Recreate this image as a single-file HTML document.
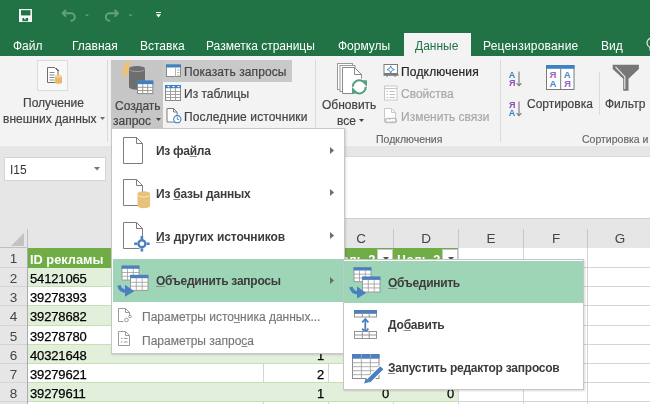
<!DOCTYPE html>
<html><head><meta charset="utf-8">
<style>
*{margin:0;padding:0;box-sizing:border-box}
html,body{width:650px;height:404px;overflow:hidden;background:#fff}
body{position:relative;-webkit-font-smoothing:antialiased;font-family:"Liberation Sans",sans-serif;font-size:12px;color:#262626}
.a{position:absolute;white-space:nowrap;will-change:transform}
svg{position:absolute;overflow:visible}
.lab{font-size:12px;line-height:14px;color:#444;-webkit-text-stroke-width:0.2px}
.dis{color:#a8a8a8}
.ch{top:231px;width:16px;margin-left:-8px;text-align:center;font-size:13.5px;line-height:15px;color:#444}
.rh{left:0;width:27px;text-align:center;font-size:13.5px;line-height:21px;color:#444}
.cell{font-size:13px;line-height:21px;color:#000;letter-spacing:-0.15px;-webkit-text-stroke:0.25px #000}
.fb{width:16px;height:16px;background:#fff;border:1px solid #c6c6c6}
.mi{font-size:12px;font-weight:bold;line-height:15px;color:#3c3c3c;letter-spacing:-0.22px}
u{text-decoration-color:#8a8a8a;text-underline-offset:1px}
.ms{font-size:12px;line-height:15px;color:#777;-webkit-text-stroke-width:0.15px}
.glab{font-size:10.5px;line-height:14px;color:#666;-webkit-text-stroke-width:0.15px}
</style></head><body>

<!-- title bar -->
<div class="a" style="left:0;top:0;width:650px;height:56px;background:#217346"></div>
<div class="a" style="left:13px;top:38px;color:#fff;line-height:16px">Файл</div>
<div class="a" style="left:72px;top:38px;color:#fff;line-height:16px">Главная</div>
<div class="a" style="left:140px;top:38px;color:#fff;line-height:16px">Вставка</div>
<div class="a" style="left:206px;top:38px;color:#fff;line-height:16px">Разметка страницы</div>
<div class="a" style="left:338px;top:38px;color:#fff;line-height:16px">Формулы</div>
<div class="a" style="left:404px;top:33px;width:67px;height:24px;background:#f3f3f3"></div>
<div class="a" style="left:415px;top:38px;color:#217346;line-height:16px">Данные</div>
<div class="a" style="left:482.5px;top:38px;color:#fff;line-height:16px;letter-spacing:0.2px">Рецензирование</div>
<div class="a" style="left:601px;top:38px;color:#fff;line-height:16px">Вид</div>


<!-- QAT -->
<svg style="left:19px;top:9px" width="13" height="13" viewBox="0 0 13 13">
 <rect x="0" y="0" width="13" height="13" fill="#f4f7f5"/>
 <rect x="2" y="1.2" width="9.4" height="5.2" fill="#217346"/>
 <rect x="3.4" y="9" width="5.7" height="3.2" fill="#217346"/>
 <rect x="5.2" y="9" width="1.6" height="1.4" fill="#f4f7f5"/>
</svg>
<svg style="left:0;top:0" width="140" height="30" viewBox="0 0 140 30">
 <g fill="none" stroke="#62a37c" stroke-width="2">
  <path d="M66 10l-3.3 3.3 3.3 3.3"/>
  <path d="M63.5 13.3h7.6a3.7 3.7 0 0 1 0 7.4h-0.6"/>
  <path d="M114.6 10l3.3 3.3-3.3 3.3"/>
  <path d="M117.1 13.3h-7.6a3.7 3.7 0 0 0 0 7.4h0.6"/>
 </g>
 <path d="M85 14.5h4l-2 2z" fill="#62a37c"/>
 <path d="M128.5 14.5h4l-2 2z" fill="#62a37c"/>
</svg>
<svg style="left:155.8px;top:12.3px" width="5" height="6" viewBox="0 0 5 6">
 <rect x="0" y="0" width="5" height="1" fill="#fff"/>
 <path d="M0 2.3h5l-2.5 3.2z" fill="#fff"/>
</svg>
<svg style="left:646px;top:38px" width="12" height="16" viewBox="0 0 12 16">
 <path d="M4 12v-2.5a5 5 0 1 1 4 0v2.5z" fill="none" stroke="#e8f0eb" stroke-width="1.1"/>
</svg>

<!-- ribbon -->
<div class="a" style="left:0;top:56px;width:650px;height:90px;background:#f3f3f3"></div>


<!-- ribbon content -->
<div class="a" style="left:37px;top:60px;width:31px;height:31px;background:#f8f8f8;border:1px solid #dcdcdc"></div>
<svg style="left:47px;top:67px" width="16" height="18" viewBox="0 0 16 18">
 <path d="M0.5 0.5h7l3.5 3.5v11.5h-10.5z" fill="#fff" stroke="#6d6d6d"/>
 <path d="M2.5 5.5h5M2.5 8h5M2.5 10.5h5M2.5 13h5" stroke="#8a8a8a"/>
 <path d="M9 1l3 3" stroke="#6d6d6d"/>
 <path d="M8 9.5a3.5 1.2 0 0 1 7 0v6a3.5 1.2 0 0 1 -7 0z" fill="#e8b86b"/>
 <ellipse cx="11.5" cy="9.5" rx="3.5" ry="1.2" fill="#f3d19b"/>
</svg>
<div class="a lab" style="left:23px;top:96px">Получение</div>
<div class="a lab" style="left:3px;top:112px">внешних данных</div>
<svg style="left:100px;top:117px" width="5" height="3"><path d="M0 0h5l-2.5 3z" fill="#6d6d6d"/></svg>
<div class="a" style="left:107px;top:60px;width:1px;height:82px;background:#dadada"></div>

<div class="a" style="left:111px;top:60px;width:52px;height:68px;background:#c6c6c6"></div>
<div class="a" style="left:162px;top:60px;width:130px;height:21.5px;background:#c9c9c9"></div>
<svg style="left:0;top:0" width="650" height="150" viewBox="0 0 650 150">
 <path d="M126 62h6l-4.3 7.3h3.6l-10.3 11.2 4.2-8.5h-3.7z" fill="#efc070"/>
 <path d="M129 68.6a8 2.6 0 0 1 16 0v18.5a8 2.6 0 0 1 -16 0z" fill="#6e6e6e"/>
 <path d="M129.5 69.5a7.5 2 0 0 0 15 0" fill="none" stroke="#a5a5a5" stroke-width="0.9"/>
 <rect x="137.5" y="81" width="15.3" height="12.6" fill="#fff" stroke="#8a8a8a"/>
 <rect x="137" y="80.6" width="16.3" height="3.6" fill="#3e7fc2"/>
 <path d="M137.5 87.3h15.3M137.5 90.5h15.3M142.7 84.2v9.4M147.7 84.2v9.4" stroke="#9a9a9a"/>
</svg>
<div class="a lab" style="left:115px;top:98.5px">Создать</div>
<div class="a lab" style="left:113px;top:113.5px">запрос</div>
<svg style="left:155.5px;top:118px" width="5" height="3"><path d="M0 0h5l-2.5 3z" fill="#444"/></svg>

<svg style="left:0;top:0" width="650" height="150" viewBox="0 0 650 150">
 <rect x="166.5" y="65" width="14" height="11.5" fill="#fff" stroke="#8a8a8a"/>
 <rect x="166" y="64.5" width="15" height="3" fill="#3e82c4"/>
 <path d="M175.5 67.5v9M177 70h2.5M177 72.5h2.5M177 75h2.5" stroke="#b5b5b5"/>
</svg>
<div class="a lab" style="left:184px;top:65px;letter-spacing:0.1px">Показать запросы</div>
<svg style="left:0;top:0" width="650" height="150" viewBox="0 0 650 150">
 <rect x="165.5" y="85.5" width="15" height="15" fill="#fff" stroke="#8a8a8a"/>
 <rect x="165" y="85" width="16" height="3.2" fill="#3e82c4"/>
 <path d="M166 91.5h14M166 94.5h14M166 97.5h14M170.5 88v12.5M175.5 88v12.5" stroke="#a0a0a0"/>
 <path d="M167 86h3l-1.5 1.5zM172 86h3l-1.5 1.5zM177 86h3l-1.5 1.5z" fill="#fff"/>
</svg>
<div class="a lab" style="left:184px;top:87px">Из таблицы</div>
<svg style="left:0;top:0" width="650" height="150" viewBox="0 0 650 150">
 <path d="M167 108.5h6.5l3.5 3.5v10h-10z" fill="#fff" stroke="#7a7a7a"/>
 <path d="M173.5 108.5v3.5h3.5" fill="none" stroke="#7a7a7a"/>
 <circle cx="177.3" cy="119.2" r="3.6" fill="#fff" stroke="#3e82c4" stroke-width="1.1"/>
 <path d="M177.3 117.2v2.2h1.8" fill="none" stroke="#3e82c4" stroke-width="0.9"/>
</svg>
<div class="a lab" style="left:184px;top:110px;letter-spacing:0.13px">Последние источники</div>
<div class="a" style="left:315px;top:60px;width:1px;height:82px;background:#dadada"></div>

<!-- Подключения group -->
<svg style="left:0;top:0" width="400" height="100" viewBox="0 0 400 100">
 <rect x="337.5" y="63.5" width="15" height="26" fill="#fff" stroke="#9a9a9a"/>
 <rect x="340" y="65.5" width="15" height="26" fill="#fff" stroke="#9a9a9a"/>
 <path d="M342.5 67.5h12l7 7v19h-19z" fill="#fff" stroke="#8a8a8a"/>
 <path d="M354.5 67.5v7h7" fill="none" stroke="#8a8a8a"/>
 <circle cx="359.3" cy="86.8" r="8.5" fill="#fff"/>
 <g fill="none" stroke="#55a07f" stroke-width="2">
  <path d="M352.8 86.8A6.5 6.5 0 0 1 362.8 81.3"/>
  <path d="M365.8 86.8A6.5 6.5 0 0 1 355.8 92.3"/>
 </g>
 <path d="M360.5 80.2h6.5v6.5z" fill="#55a07f"/>
 <path d="M352 87v6.5h6.5z" fill="#55a07f"/>
</svg>
<div class="a lab" style="left:322px;top:97.5px">Обновить</div>
<div class="a lab" style="left:336.5px;top:114px">все</div>
<svg style="left:358.5px;top:119px" width="5" height="3"><path d="M0 0h5l-2.5 3z" fill="#444"/></svg>

<svg style="left:0;top:0" width="650" height="150" viewBox="0 0 650 150">
 <rect x="384" y="64.5" width="13.5" height="9" fill="#fff" stroke="#7a7a7a"/>
 <path d="M383.5 74h15v1.8h-15z" fill="#7a7a7a"/>
 <path d="M386 76h2M394 76h2" stroke="#7a7a7a"/>
 <path d="M390.7 65.8l1.1 2.6 2.6 1.1-2.6 1.1-1.1 2.6-1.1-2.6-2.6-1.1 2.6-1.1z" fill="none" stroke="#3e82c4" stroke-width="0.9"/>
</svg>
<div class="a lab" style="left:401px;top:65px;color:#262626;letter-spacing:0.18px">Подключения</div>
<svg style="left:0;top:0" width="650" height="150" viewBox="0 0 650 150">
 <rect x="384.5" y="86" width="12.5" height="14" fill="#fff" stroke="#c8c8c8"/>
 <path d="M384.5 88.5h12.5" stroke="#c8c8c8"/>
 <path d="M386.5 91.5h1.5M386.5 94.5h1.5M386.5 97.5h1.5M389.5 91.5h5.5M389.5 94.5h5.5M389.5 97.5h5.5" stroke="#c0c0c0"/>
</svg>
<div class="a lab dis" style="left:401px;top:87px">Свойства</div>
<svg style="left:0;top:0" width="650" height="150" viewBox="0 0 650 150">
 <path d="M384.5 108.5h7l4 4v9.5h-11z" fill="#fff" stroke="#c8c8c8"/>
 <path d="M391.5 108.5v4h4" fill="none" stroke="#c8c8c8"/>
 <path d="M390 118.3h-2.3a2.2 2.2 0 0 0 0 4.4h3a2.2 2.2 0 0 0 2-1.5M392 122.7h2.3a2.2 2.2 0 0 0 0-4.4h-3a2.2 2.2 0 0 0 -2 1.5" fill="none" stroke="#bdbdbd" stroke-width="1.3"/>
</svg>
<div class="a lab dis" style="left:401px;top:110px">Изменить связи</div>
<div class="a glab" style="left:376px;top:132px">Подключения</div>
<div class="a" style="left:500px;top:60px;width:1px;height:82px;background:#dadada"></div>

<!-- sort group -->
<svg style="left:0;top:0" width="650" height="150" viewBox="0 0 650 150">
 <g font-family="Liberation Sans" font-size="9" font-weight="bold">
  <text x="508.8" y="78" fill="#3e82c4">A</text>
  <text x="509" y="85.6" fill="#8a4fb5">Я</text>
  <text x="509" y="107.6" fill="#8a4fb5">Я</text>
  <text x="508.8" y="115.6" fill="#3e82c4">A</text>
 </g>
 <g fill="none" stroke="#777" stroke-width="1.1">
  <path d="M519 71.5v14M516.6 83.2l2.4 2.6 2.4-2.6"/>
  <path d="M519 101.5v14M516.6 113.2l2.4 2.6 2.4-2.6"/>
 </g>
</svg>
<svg style="left:0;top:0" width="650" height="150" viewBox="0 0 650 150">
 <rect x="546.5" y="65.5" width="27.5" height="24" fill="#fff" stroke="#7a7a7a"/>
 <rect x="546" y="65" width="28.5" height="3.8" fill="#3e82c4"/>
 <path d="M560.7 68.8v21" stroke="#7a7a7a"/>
 <g font-family="Liberation Sans" font-size="9.5" font-weight="bold">
  <text x="549.6" y="78.2" fill="#9a62c2">Я</text>
  <text x="549.4" y="86.8" fill="#4a86c8">A</text>
  <text x="563.8" y="78.2" fill="#4a86c8">A</text>
  <text x="564" y="86.8" fill="#9a62c2">Я</text>
 </g>
</svg>
<div class="a lab" style="left:527px;top:97px">Сортировка</div>
<div class="a" style="left:599px;top:72px;width:1px;height:43px;background:#dadada"></div>
<svg style="left:0;top:0" width="650" height="150" viewBox="0 0 650 150">
 <path d="M612.7 64.8h26.2v4.2l-10.4 9.8v12h-5.3v-12l-10.5-9.8z" fill="#777"/>
 <path d="M615.5 66.8l9.3 9.8v12.4" fill="none" stroke="#eee" stroke-width="1.1"/>
</svg>
<div class="a lab" style="left:605px;top:97px">Фильтр</div>
<div class="a glab" style="left:582px;top:132px">Сортировка и фильтр</div>

<!-- gray band / formula bar area -->
<div class="a" style="left:0;top:146px;width:650px;height:102px;background:#e6e6e6"></div>
<div class="a" style="left:200px;top:156px;width:450px;height:1px;background:#dadada"></div>
<div class="a" style="left:200px;top:157px;width:450px;height:61px;background:#fff"></div>
<div class="a" style="left:4px;top:157px;width:102px;height:24px;background:#fff;border:1px solid #d4d4d4"></div>
<svg style="left:94px;top:167px" width="6" height="4"><path d="M0 0h6l-3 3.5z" fill="#777"/></svg>
<div class="a" style="left:10px;top:163px;line-height:14px;font-size:12px;color:#333">I15</div>

<!-- grid -->
<div class="a" style="left:0;top:219px;width:650px;height:29px;background:#e6e6e6"></div>
<div class="a" style="left:0;top:247px;width:28px;height:1px;background:#c0c0c0"></div>
<div class="a" style="left:200px;top:218px;width:450px;height:1px;background:#d0d0d0"></div>
<svg style="left:11px;top:233px" width="13" height="13"><path d="M13 0v13h-13z" fill="#c2c2c2"/></svg>
<div class="a" style="left:27px;top:229px;width:1px;height:19px;background:#c0c0c0"></div>
<div class="a" style="left:263px;top:229px;width:1px;height:19px;background:#c8c8c8"></div>
<div class="a" style="left:328px;top:229px;width:1px;height:19px;background:#c8c8c8"></div>
<div class="a" style="left:393px;top:229px;width:1px;height:19px;background:#c8c8c8"></div>
<div class="a" style="left:458px;top:229px;width:1px;height:19px;background:#c8c8c8"></div>
<div class="a" style="left:523px;top:229px;width:1px;height:19px;background:#c8c8c8"></div>
<div class="a" style="left:587px;top:229px;width:1px;height:19px;background:#c8c8c8"></div>
<div class="a ch" style="left:145px">A</div>
<div class="a ch" style="left:295px">B</div>
<div class="a ch" style="left:361px">C</div>
<div class="a ch" style="left:426px">D</div>
<div class="a ch" style="left:491px">E</div>
<div class="a ch" style="left:556px">F</div>
<div class="a ch" style="left:620px">G</div>
<div class="a" style="left:0;top:248px;width:27px;height:156px;background:#e6e6e6"></div>
<div class="a" style="left:28px;top:248px;width:430px;height:20px;background:#70ad47"></div>
<div class="a" style="left:30px;top:252px;line-height:15px;font-size:12.8px;font-weight:bold;color:#fff">ID рекламы</div>
<div class="a" style="left:267px;top:252px;line-height:15px;font-size:12.8px;font-weight:bold;color:#fff">Цель 1</div>
<div class="a" style="left:332px;top:252px;line-height:15px;font-size:12.8px;font-weight:bold;color:#fff">Цель 2</div>
<div class="a" style="left:397px;top:252px;line-height:15px;font-size:12.8px;font-weight:bold;color:#fff">Цель 3</div>
<div class="a fb" style="left:312px;top:249px"><svg style="left:4.5px;top:6.5px" width="6" height="4"><path d="M0 0h6l-3 3.5z" fill="#555"/></svg></div>
<div class="a fb" style="left:377px;top:249px"><svg style="left:4.5px;top:6.5px" width="6" height="4"><path d="M0 0h6l-3 3.5z" fill="#555"/></svg></div>
<div class="a fb" style="left:442px;top:249px"><svg style="left:4.5px;top:6.5px" width="6" height="4"><path d="M0 0h6l-3 3.5z" fill="#555"/></svg></div>
<div class="a rh" style="top:248px">1</div>
<div class="a" style="left:0;top:267px;width:27px;height:1px;background:#d4d4d4"></div>
<div class="a" style="left:458px;top:267px;width:192px;height:1px;background:#d4d4d4"></div>
<div class="a" style="left:28px;top:268px;width:430px;height:19px;background:#e2efda;border-bottom:1px solid #c6e0b4"></div>
<div class="a cell" style="left:30px;top:268px">54121065</div>
<div class="a rh" style="top:268px">2</div>
<div class="a" style="left:0;top:286px;width:27px;height:1px;background:#d4d4d4"></div>
<div class="a" style="left:458px;top:286px;width:192px;height:1px;background:#d4d4d4"></div>
<div class="a" style="left:28px;top:287px;width:430px;height:19px;background:#fff;border-bottom:1px solid #c6e0b4"></div>
<div class="a" style="left:263px;top:287px;width:1px;height:18px;background:#d4d4d4"></div>
<div class="a" style="left:328px;top:287px;width:1px;height:18px;background:#d4d4d4"></div>
<div class="a" style="left:393px;top:287px;width:1px;height:18px;background:#d4d4d4"></div>
<div class="a cell" style="left:30px;top:287px">39278393</div>
<div class="a rh" style="top:287px">3</div>
<div class="a" style="left:0;top:305px;width:27px;height:1px;background:#d4d4d4"></div>
<div class="a" style="left:458px;top:305px;width:192px;height:1px;background:#d4d4d4"></div>
<div class="a" style="left:28px;top:306px;width:430px;height:20px;background:#e2efda;border-bottom:1px solid #c6e0b4"></div>
<div class="a cell" style="left:30px;top:306px">39278682</div>
<div class="a rh" style="top:306px">4</div>
<div class="a" style="left:0;top:325px;width:27px;height:1px;background:#d4d4d4"></div>
<div class="a" style="left:458px;top:325px;width:192px;height:1px;background:#d4d4d4"></div>
<div class="a" style="left:28px;top:326px;width:430px;height:19px;background:#fff;border-bottom:1px solid #c6e0b4"></div>
<div class="a" style="left:263px;top:326px;width:1px;height:18px;background:#d4d4d4"></div>
<div class="a" style="left:328px;top:326px;width:1px;height:18px;background:#d4d4d4"></div>
<div class="a" style="left:393px;top:326px;width:1px;height:18px;background:#d4d4d4"></div>
<div class="a cell" style="left:30px;top:326px">39278780</div>
<div class="a rh" style="top:326px">5</div>
<div class="a" style="left:0;top:344px;width:27px;height:1px;background:#d4d4d4"></div>
<div class="a" style="left:458px;top:344px;width:192px;height:1px;background:#d4d4d4"></div>
<div class="a" style="left:28px;top:345px;width:430px;height:19px;background:#e2efda;border-bottom:1px solid #c6e0b4"></div>
<div class="a cell" style="left:30px;top:345px">40321648</div>
<div class="a cell" style="left:264px;top:345px;width:60px;text-align:right">1</div>
<div class="a cell" style="left:329px;top:345px;width:60px;text-align:right">0</div>
<div class="a cell" style="left:394px;top:345px;width:60px;text-align:right">0</div>
<div class="a rh" style="top:345px">6</div>
<div class="a" style="left:0;top:363px;width:27px;height:1px;background:#d4d4d4"></div>
<div class="a" style="left:458px;top:363px;width:192px;height:1px;background:#d4d4d4"></div>
<div class="a" style="left:28px;top:364px;width:430px;height:19px;background:#fff;border-bottom:1px solid #c6e0b4"></div>
<div class="a" style="left:263px;top:364px;width:1px;height:18px;background:#d4d4d4"></div>
<div class="a" style="left:328px;top:364px;width:1px;height:18px;background:#d4d4d4"></div>
<div class="a" style="left:393px;top:364px;width:1px;height:18px;background:#d4d4d4"></div>
<div class="a cell" style="left:30px;top:364px">39279621</div>
<div class="a cell" style="left:264px;top:364px;width:60px;text-align:right">2</div>
<div class="a cell" style="left:329px;top:364px;width:60px;text-align:right">0</div>
<div class="a cell" style="left:394px;top:364px;width:60px;text-align:right">0</div>
<div class="a rh" style="top:364px">7</div>
<div class="a" style="left:0;top:382px;width:27px;height:1px;background:#d4d4d4"></div>
<div class="a" style="left:458px;top:382px;width:192px;height:1px;background:#d4d4d4"></div>
<div class="a" style="left:28px;top:383px;width:430px;height:19px;background:#e2efda;border-bottom:1px solid #c6e0b4"></div>
<div class="a cell" style="left:30px;top:383px">39279611</div>
<div class="a cell" style="left:264px;top:383px;width:60px;text-align:right">1</div>
<div class="a cell" style="left:329px;top:383px;width:60px;text-align:right">0</div>
<div class="a cell" style="left:394px;top:383px;width:60px;text-align:right">0</div>
<div class="a rh" style="top:383px">8</div>
<div class="a" style="left:0;top:401px;width:27px;height:1px;background:#d4d4d4"></div>
<div class="a" style="left:458px;top:401px;width:192px;height:1px;background:#d4d4d4"></div>
<div class="a" style="left:28px;top:402px;width:430px;height:2px;background:#fff"></div>
<div class="a" style="left:27px;top:248px;width:1px;height:156px;background:#ababab"></div>
<div class="a" style="left:458px;top:248px;width:1px;height:156px;background:#d4d4d4"></div>
<div class="a" style="left:523px;top:248px;width:1px;height:156px;background:#d4d4d4"></div>
<div class="a" style="left:587px;top:248px;width:1px;height:156px;background:#d4d4d4"></div>
<div class="a" style="left:263px;top:402px;width:1px;height:2px;background:#d4d4d4"></div>
<div class="a" style="left:328px;top:402px;width:1px;height:2px;background:#d4d4d4"></div>
<div class="a" style="left:393px;top:402px;width:1px;height:2px;background:#d4d4d4"></div>

<!-- dropdown menu -->
<div class="a" style="left:111px;top:128px;width:234px;height:226px;background:#fff;border:1px solid #c6c6c6;box-shadow:1px 1px 2px rgba(0,0,0,.15)"></div>
<div class="a" style="left:113px;top:259px;width:231px;height:43px;background:#9fd5b7"></div>
<div class="a mi" style="left:156px;top:144px;letter-spacing:-0.27px">Из фа<u>й</u>ла</div>
<div class="a mi" style="left:156px;top:187px;letter-spacing:-0.21px">Из <u>б</u>азы данных</div>
<div class="a mi" style="left:156px;top:230px;letter-spacing:-0.08px"><u>И</u>з других источников</div>
<div class="a mi" style="left:156px;top:274px;letter-spacing:-0.26px"><u>О</u>бъединить запросы</div>
<div class="a ms" style="left:142px;top:310px">Параметры исто<u>ч</u>ника данных...</div>
<div class="a ms" style="left:142px;top:334px">Параметры запро<u>с</u>а</div>
<svg style="left:330px;top:147px" width="4" height="7"><path d="M0 0l4 3.5-4 3.5z" fill="#6d6d6d"/></svg>
<svg style="left:330px;top:189px" width="4" height="7"><path d="M0 0l4 3.5-4 3.5z" fill="#6d6d6d"/></svg>
<svg style="left:330px;top:232px" width="4" height="7"><path d="M0 0l4 3.5-4 3.5z" fill="#6d6d6d"/></svg>
<svg style="left:330px;top:277px" width="4" height="7"><path d="M0 0l4 3.5-4 3.5z" fill="#6d6d6d"/></svg>

<!-- submenu -->
<div class="a" style="left:343px;top:259px;width:241px;height:131px;background:#fff;border:1px solid #c6c6c6;box-shadow:1px 1px 2px rgba(0,0,0,.15)"></div>
<div class="a" style="left:344px;top:261px;width:239px;height:42px;background:#9fd5b7"></div>
<div class="a mi" style="left:388px;top:276px;letter-spacing:-0.3px"><u>О</u>бъединить</div>
<div class="a mi" style="left:388px;top:318px;letter-spacing:-0.2px">До<u>б</u>авить</div>
<div class="a mi" style="left:388px;top:361px;letter-spacing:-0.24px"><u>З</u>апустить редактор запросов</div>

<!-- menu icons -->
<svg style="left:0;top:0" width="650" height="404" viewBox="0 0 650 404">
 <path d="M123.5 137.5h13l6 6v20h-19z" fill="#fff" stroke="#7d7d7d"/>
 <path d="M136.5 137.5v6h6" fill="none" stroke="#7d7d7d"/>

 <path d="M123.5 179.5h13l6 6v20h-19z" fill="#fff" stroke="#7d7d7d"/>
 <path d="M136.5 179.5v6h6" fill="none" stroke="#7d7d7d"/>
 <path d="M137.5 193.5a6.3 2.2 0 0 1 12.6 0v12.5a6.3 2.2 0 0 1 -12.6 0z" fill="#e9c27a"/>
 <path d="M138 195.3a5.8 1.6 0 0 0 11.6 0" fill="none" stroke="#fbefd6" stroke-width="0.8"/>

 <path d="M123.5 222.5h13l6 6v20h-19z" fill="#fff" stroke="#7d7d7d"/>
 <path d="M136.5 222.5v6h6" fill="none" stroke="#7d7d7d"/>
 <circle cx="141.9" cy="243.7" r="5.2" fill="#fff"/>
 <circle cx="141.9" cy="243.7" r="3.5" fill="none" stroke="#4a7fc1" stroke-width="2.4"/>
 <path d="M141.9 236v3M141.9 248.4v3M134.2 243.7h3M146.6 243.7h3" stroke="#4a7fc1" stroke-width="2.6"/>
<g transform="translate(0 0)"><rect x="122" y="266" width="17" height="14" fill="#fff" stroke="#8a8a8a" stroke-width="0.8"/><rect x="121.6" y="265.6" width="17.8" height="3.2" fill="#4a7fc1"/><path d="M127.5 268.8v11.2M133.3 268.8v11.2M122 272.5h17M122 276.3h17" stroke="#9a9a9a" stroke-width="0.8"/><rect x="130.5" y="275.3" width="17.5" height="15" fill="#fff" stroke="#8a8a8a" stroke-width="0.8"/><rect x="130.1" y="274.9" width="18.3" height="3.3" fill="#4a7fc1"/><path d="M136.3 278.2v12M142.2 278.2v12M130.5 282.3h17.5M130.5 286.2h17.5" stroke="#9a9a9a" stroke-width="0.8"/><path d="M119 285.3c0.8 4.2 3.5 5.9 7.5 5.9" fill="none" stroke="#4a7fc1" stroke-width="3.5"/><path d="M125 284.8l9.3 6.4-9.3 5.6z" fill="#4a7fc1"/></g>
 <g stroke="#9a9a9a" fill="none">
  <path d="M118.5 308.5h7l4 4v3"/>
  <path d="M125.5 308.5v4h4"/>
  <path d="M118.5 308.5v13h5"/>
  <circle cx="126.5" cy="320" r="1.8"/>
  <circle cx="130" cy="316.5" r="1.3"/>
  <path d="M118.5 331.5h7l4 4v10h-11z"/>
  <path d="M125.5 331.5v4h4"/>
  <path d="M121 338.5h1.5M121 342h1.5M124 338.5h3.5M124 342h3.5"/>
 </g>
<g transform="translate(232 1.7)"><rect x="122" y="266" width="17" height="14" fill="#fff" stroke="#8a8a8a" stroke-width="0.8"/><rect x="121.6" y="265.6" width="17.8" height="3.2" fill="#4a7fc1"/><path d="M127.5 268.8v11.2M133.3 268.8v11.2M122 272.5h17M122 276.3h17" stroke="#9a9a9a" stroke-width="0.8"/><rect x="130.5" y="275.3" width="17.5" height="15" fill="#fff" stroke="#8a8a8a" stroke-width="0.8"/><rect x="130.1" y="274.9" width="18.3" height="3.3" fill="#4a7fc1"/><path d="M136.3 278.2v12M142.2 278.2v12M130.5 282.3h17.5M130.5 286.2h17.5" stroke="#9a9a9a" stroke-width="0.8"/><path d="M119 285.3c0.8 4.2 3.5 5.9 7.5 5.9" fill="none" stroke="#4a7fc1" stroke-width="3.5"/><path d="M125 284.8l9.3 6.4-9.3 5.6z" fill="#4a7fc1"/></g>
 <rect x="354" y="310" width="23" height="4" fill="#4a7fc1"/>
 <rect x="354.5" y="313.5" width="22" height="3.5" fill="#fff" stroke="#8a8a8a" stroke-width="0.9"/>
 <path d="M362.3 314v3M369.2 314v3" stroke="#8a8a8a" stroke-width="0.9"/>
 <path d="M365.3 320v11" stroke="#4a7fc1" stroke-width="1.8"/>
 <path d="M362.2 322.3l3.1-3.3 3.1 3.3M362.2 328.7l3.1 3.3 3.1-3.3" fill="none" stroke="#4a7fc1" stroke-width="1.8"/>
 <rect x="354.5" y="331.5" width="22" height="7" fill="#fff" stroke="#8a8a8a" stroke-width="0.9"/>
 <path d="M354.5 335h22M362.3 331.5v7M369.2 331.5v7" stroke="#8a8a8a" stroke-width="0.9"/>

 <rect x="352.5" y="354.5" width="26.5" height="24" fill="#fff" stroke="#8a8a8a"/>
 <rect x="352" y="354" width="27.5" height="4.7" fill="#4a7fc1"/>
 <path d="M361.4 354v24.5M370.4 354v24.5M352.5 362.7h26.5M352.5 366.7h26.5M352.5 370.7h26.5M352.5 374.7h26.5" stroke="#a5a5a5" stroke-width="0.9"/>
 <path d="M382 367.5l-14.5 14.5" stroke="#fff" stroke-width="6.5"/>
 <path d="M381.8 367.7l-13.3 13.3" stroke="#4a7fc1" stroke-width="4.4"/>
 <path d="M364.2 383.5l1.6-5.4 3.9 3.9z" fill="#4a7fc1"/>
</svg>
</body></html>
